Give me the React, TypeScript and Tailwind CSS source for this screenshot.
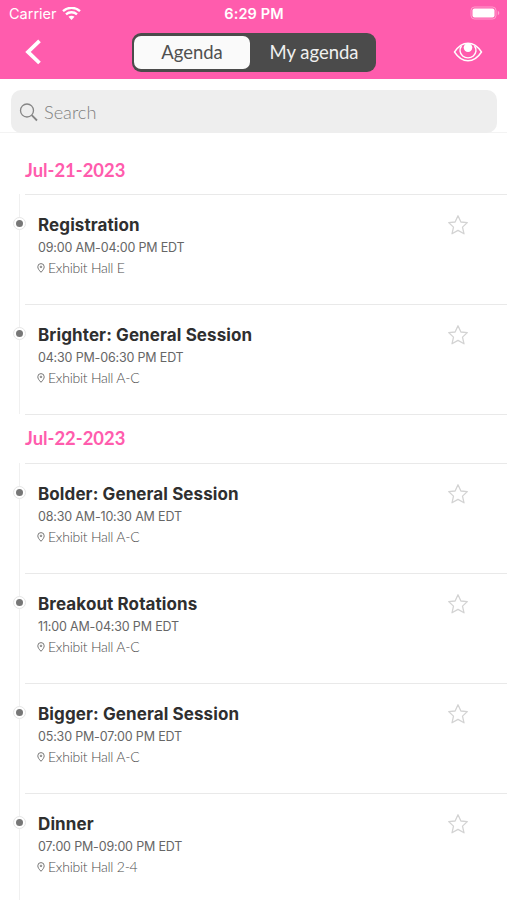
type Session = { title: string; time: string; place: string };

const days: { date: string; sessions: Session[] }[] = [
  {
    date: 'Jul-21-2023',
    sessions: [
      { title: 'Registration', time: '09:00 AM-04:00 PM EDT', place: 'Exhibit Hall E' },
      { title: 'Brighter: General Session', time: '04:30 PM-06:30 PM EDT', place: 'Exhibit Hall A-C' },
    ],
  },
  {
    date: 'Jul-22-2023',
    sessions: [
      { title: 'Bolder: General Session', time: '08:30 AM-10:30 AM EDT', place: 'Exhibit Hall A-C' },
      { title: 'Breakout Rotations', time: '11:00 AM-04:30 PM EDT', place: 'Exhibit Hall A-C' },
      { title: 'Bigger: General Session', time: '05:30 PM-07:00 PM EDT', place: 'Exhibit Hall A-C' },
      { title: 'Dinner', time: '07:00 PM-09:00 PM EDT', place: 'Exhibit Hall 2-4' },
    ],
  },
];

function Wifi() {
  return (
    <svg className="ml-[5px] h-[14px] w-[19px]" viewBox="0 0 19 14" fill="none" stroke="#fff" strokeWidth="2.3">
      <path d="M1 4.200C5.700 -.3 13.300 -.3 18 4.200" />
      <path d="M4 7.400c3.100-2.900 7.900-2.900 11 0" />
      <path d="M6.500 9.800c1.800-1.500 4.200-1.500 6 0L9.500 13z" fill="#fff" stroke="none" />
    </svg>
  );
}

function Battery() {
  return (
    <svg className="h-[15px] w-[31px]" viewBox="0 0 31 15" fill="none">
      <rect x="1" y="1" width="25" height="12" rx="3.5" stroke="#fff" strokeOpacity=".4" />
      <rect x="2.500" y="2.500" width="22" height="9" rx="2" fill="#fff" />
      <path d="M27.800 4.800c2 .8 2 3.600 0 4.400z" fill="#fff" fillOpacity=".45" />
    </svg>
  );
}

function Eye() {
  return (
    <svg className="h-[22px] w-[30px]" viewBox="0 0 30 22" fill="none" stroke="#fff" strokeWidth="1.4">
      <path d="M1.500 11C5 5.600 9.500 2.200 15 2.200S25 5.600 28.500 11C25 16.400 20.500 19.800 15 19.800S5 16.400 1.500 11z" />
      <path d="M8.500 5a8 7.500 0 1 0 13 0" />
      <circle cx="15" cy="6.600" r="4.300" fill="#fff" stroke="none" />
    </svg>
  );
}

function Row({ session }: { session: Session }) {
  return (
    <div className="flex h-[110px]">
      <div className="flex w-[25px] shrink-0 justify-center pl-[13px]">
        <div className="relative h-full w-px bg-[#f0f0f0]">
          <span className="absolute top-[23px] left-[-6px] flex size-[13px] items-center justify-center rounded-full border border-[#e6e6e6] bg-white">
            <span className="size-[7px] rounded-full bg-[#777]" />
          </span>
        </div>
      </div>
      <div className="flex flex-1 justify-between border-t border-[#e9e9e9] pl-[13px] pr-[38px]">
        <div className="flex flex-col pt-[19px]">
          <h3 className="h-[22px] text-[17px] leading-[23px] font-bold tracking-[0.1px] whitespace-nowrap text-[#2f2f2f]">{session.title}</h3>
          <p className="mt-[3px] h-[17px] text-[12.500px] leading-[17px] tracking-[-0.17px] whitespace-nowrap text-[#666]">{session.time}</p>
          <p className="mt-[2px] -ml-px flex h-[19px] items-center font-[Lato,sans-serif] text-[14px] font-light tracking-[-0.25px] whitespace-nowrap text-[#4d4d4d]">
            <svg className="mr-[3px] h-[10px] w-[8px]" viewBox="0 0 8 10" fill="none" stroke="#777">
              <path d="M4 9.300C2 7.200.8 5.500.8 3.800a3.200 3.200 0 0 1 6.400 0C7.200 5.500 6 7.200 4 9.300z" />
              <circle cx="4" cy="3.900" r=".8" />
            </svg>
            {session.place}
          </p>
        </div>
        <svg className="mt-[19px] h-[21px] w-[22px]" viewBox="0 0 22 21" fill="none" stroke="#d3d3d3" strokeWidth="1.300">
          <path d="M11 1.800L13.900 8L20.300 8.600L15.500 13.100L17 19.800L11 16.400L5 19.800L6.500 13.100L1.700 8.600L8.100 8Z" strokeLinejoin="round" />
        </svg>
      </div>
    </div>
  );
}

export default function App() {
  return (
    <main className="h-[900px] w-full overflow-hidden bg-white font-[Inter,sans-serif]">
      <header className="h-[79px] bg-[#ff5cad]">
        <div className="grid h-[27px] grid-cols-3 items-center pl-[9px] pr-[6px] text-white">
          <div className="flex items-center text-[14.500px]">Carrier<Wifi /></div>
          <div className="pr-[2px] text-center text-[14.500px] font-semibold tracking-[0.1px]">6:29 PM</div>
          <div className="flex justify-end"><Battery /></div>
        </div>
        <div className="flex h-[52px] items-start pl-[24px] pr-[24px]">
          <svg className="mt-[12px] h-[26px] w-[18px]" viewBox="0 0 18 26" fill="none" stroke="#fff" strokeWidth="3.800">
            <path d="M15.500 1.800L4 12.900L15.500 24" />
          </svg>
          <div className="mt-[6px] ml-[90px] flex h-[39px] w-[244px] rounded-[9px] bg-[#4b4b4b] p-[3px] pl-[2px] font-[Lato,sans-serif] text-[18.500px]">
            <div className="flex w-[116px] items-center justify-center rounded-[7px] bg-[#fafafa] text-[#505050]">Agenda</div>
            <div className="flex flex-1 items-center justify-center pl-[5px] text-[#f0f0f0]">My agenda</div>
          </div>
          <div className="mt-[14px] ml-auto"><Eye /></div>
        </div>
      </header>
      <div className="h-[54px] border-b border-[#f3f3f3] pr-[10px] pl-[11px] pt-[11px]">
        <div className="flex h-[43px] items-center rounded-[10px] bg-[#eee] pl-[8px] font-[Lato,sans-serif] text-[18.200px] font-light text-[#808080]">
          <svg className="mr-[5px] size-[20px]" viewBox="0 0 20 20" fill="none" stroke="#858585" strokeWidth="1.300">
            <circle cx="8" cy="8.500" r="6.500" />
            <path d="M12.700 13.200L18 18.500" strokeWidth="1.800" />
          </svg>
          <span className="pt-[2px]">Search</span>
        </div>
      </div>
      {days.map((day, index) => (
        <section key={day.date}>
          <h2 className={`flex items-center font-[Lato,sans-serif] text-[18.400px] font-bold text-[#ff5cad] ${index === 0 ? 'h-[61px] pl-[25px] pt-[14px]' : 'ml-[25px] h-[49px] border-t border-[#e9e9e9]'}`}>
            {day.date}
          </h2>
          {day.sessions.map((session) => <Row key={session.title} session={session} />)}
        </section>
      ))}
    </main>
  );
}
